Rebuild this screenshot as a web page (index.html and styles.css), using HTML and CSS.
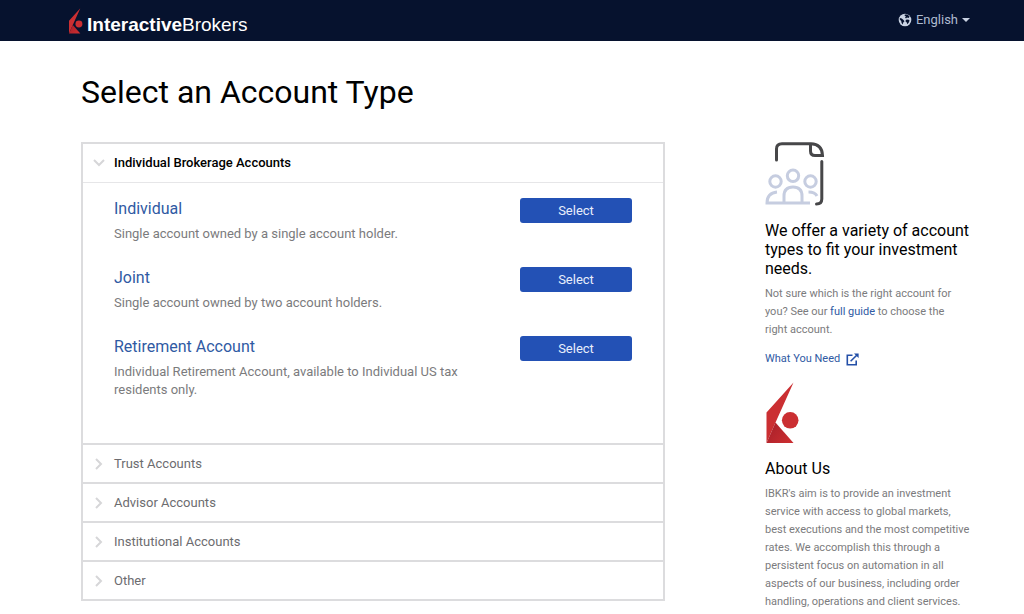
FILE: index.html
```html
<!DOCTYPE html>
<html lang="en">
<head>
<meta charset="utf-8">
<meta name="viewport" content="width=device-width, initial-scale=1">
<title>Select an Account Type</title>
<link rel="stylesheet" href="styles.css">
</head>
<body>
<svg class="defs" aria-hidden="true">
  <defs>
    <linearGradient id="fold" x1="0" y1="0" x2="1" y2="0.6">
      <stop offset="0.1" stop-color="#a8202a"/>
      <stop offset="1" stop-color="#c92d30"/>
    </linearGradient>
    <symbol id="mark" viewBox="0 0 34 62">
      <path fill="#cb2f32" d="M28.500 0.500 10.500 40.500 1.500 61V30.500z"/>
      <path fill="url(#fold)" d="M10.500 40.500 28.500 61H1.500z"/>
      <circle cx="25.200" cy="38.300" r="8.300" fill="#cb2f32"/>
    </symbol>
    <symbol id="chevron" viewBox="0 0 12 12">
      <path d="M3 1 8 6 3 11" fill="none" stroke="#d6d6d8" stroke-width="2"/>
    </symbol>
  </defs>
</svg>
<header class="topbar">
  <a class="brand" href="#">
    <svg class="brand-mark" aria-hidden="true"><use href="#mark"/></svg>
    <span class="brand-name"><b>Interactive</b>Brokers</span>
  </a>
  <button class="language" type="button">
    <svg class="globe" viewBox="0 0 14 14" aria-hidden="true">
      <circle cx="7" cy="7" r="6.300" fill="#c9d2e2"/>
      <path fill="#06122e" d="M6.800 1.600 9.400 1.600 11.600 3.400 10.600 5 9 4.600 8 5.400 7 4.600 8 3.400 6.600 2.800zM1.800 5 3.800 5.400 5.800 7.200 6.400 8.600 5.200 9.600 4.800 11.600 3.600 10 3.200 8 1.800 6.600zM8 6.800 10.200 6.600 11.600 7.600 10.800 9.600 9.400 11.200 8.600 9.200 7.400 8.200z"/>
    </svg>
    <span>English</span>
    <span class="caret"></span>
  </button>
</header>
<main class="page">
  <h1 class="title">Select an Account Type</h1>
  <div class="columns">
    <div class="accordion">
      <section class="group group-open">
        <h2 class="group-title"><button class="toggle toggle-open" type="button" aria-expanded="true"><svg class="chevron chevron-down" aria-hidden="true"><use href="#chevron"/></svg>Individual Brokerage Accounts</button></h2>
        <div class="panel">
          <div class="option">
            <div class="option-text"><h3 class="option-name"><a href="#">Individual</a></h3><p class="option-info">Single account owned by a single account holder.</p></div>
            <button class="select" type="button">Select</button>
          </div>
          <div class="option">
            <div class="option-text"><h3 class="option-name"><a href="#">Joint</a></h3><p class="option-info">Single account owned by two account holders.</p></div>
            <button class="select" type="button">Select</button>
          </div>
          <div class="option">
            <div class="option-text"><h3 class="option-name"><a href="#">Retirement Account</a></h3><p class="option-info">Individual Retirement Account, available to Individual US tax residents only.</p></div>
            <button class="select" type="button">Select</button>
          </div>
        </div>
      </section>
      <section class="group"><h2 class="group-title"><button class="toggle" type="button" aria-expanded="false"><svg class="chevron" aria-hidden="true"><use href="#chevron"/></svg>Trust Accounts</button></h2></section>
      <section class="group"><h2 class="group-title"><button class="toggle" type="button" aria-expanded="false"><svg class="chevron" aria-hidden="true"><use href="#chevron"/></svg>Advisor Accounts</button></h2></section>
      <section class="group"><h2 class="group-title"><button class="toggle" type="button" aria-expanded="false"><svg class="chevron" aria-hidden="true"><use href="#chevron"/></svg>Institutional Accounts</button></h2></section>
      <section class="group"><h2 class="group-title"><button class="toggle" type="button" aria-expanded="false"><svg class="chevron" aria-hidden="true"><use href="#chevron"/></svg>Other</button></h2></section>
    </div>
    <aside class="sidebar">
      <section class="note">
        <svg class="people" viewBox="0 0 60 64" fill="none" stroke-width="3" aria-hidden="true">
          <g stroke="#474749" stroke-linecap="round">
            <path d="M11.500 18V7Q11.500 1.800 17 1.800H46Q57 2 57.500 13.500H50Q45.500 13.500 45.500 9V2"/>
            <path d="M56.800 19.500V57Q56.800 62 51.500 62"/>
          </g>
          <g stroke="#c6cde0">
            <circle cx="10.500" cy="39.500" r="5.700"/>
            <circle cx="28" cy="33.800" r="5.700"/>
            <circle cx="45.500" cy="39.500" r="5.700"/>
            <path d="M12 50Q2 51 2 61H45"/>
            <path d="M19 61V54Q19 45 28 45T37 54V61"/>
            <path d="M43.500 50Q50 50 52 54"/>
          </g>
        </svg>
        <h2 class="note-title">We offer a variety of account types to fit your investment needs.</h2>
        <p class="note-text note-text-short">Not sure which is the right account for you? See our <a href="#">full guide</a> to choose the right account.</p>
        <a class="note-link" href="#">What You Need
          <svg class="external" viewBox="0 0 13 13" fill="none" stroke="#2450a8" aria-hidden="true"><path stroke-width="1.600" d="M6.500 2.300H1.300V11.700H10.200V7.500M4.600 8.300 11 2"/><path d="M8 .5H12.600V5z" fill="#2450a8" stroke="none"/></svg>
        </a>
      </section>
      <section class="note">
        <svg class="about-mark" aria-hidden="true"><use href="#mark"/></svg>
        <h2 class="note-title">About Us</h2>
        <p class="note-text">IBKR's aim is to provide an investment service with access to global markets, best executions and the most competitive rates. We accomplish this through a persistent focus on automation in all aspects of our business, including order handling, operations and client services.</p>
      </section>
    </aside>
  </div>
</main>
</body>
</html>
```
FILE: styles.css
```css
* { box-sizing: border-box; }
body {
  margin: 0;
  background: #fff;
  color: #000;
  font: 13px/18px Roboto, "Liberation Sans", sans-serif;
}
h1, h2, h3, p { margin: 0; font-weight: 400; }
a { color: #2f5aa3; text-decoration: none; }
button { border: 0; font: inherit; cursor: pointer; }
.defs { position: absolute; width: 0; height: 0; }

.topbar {
  display: flex;
  justify-content: space-between;
  align-items: center;
  height: 41px;
  padding: 0 54px 0 68px;
  background: #06122e;
}
.brand { display: flex; align-items: flex-end; gap: 4px; color: #fff; }
.brand-mark { width: 15px; height: 26px; }
.brand-name { font: 19px/18px "Liberation Sans", Arial, sans-serif; }
.language {
  display: flex;
  align-items: center;
  gap: 4px;
  padding: 0 0 1px;
  background: none;
  color: #aebbd0;
}
.globe { width: 14px; height: 14px; }
.caret {
  border: 4px solid transparent;
  border-top-color: #c9d2e2;
  border-bottom: 0;
}

.page { padding: 32px 50px 4px 81px; }
.title { font-size: 32px; line-height: 38px; }
.columns { display: flex; align-items: flex-start; gap: 100px; margin-top: 31px; }
.accordion { flex: 1; border: 2px solid #dcdcde; }
.group + .group { border-top: 2px solid #dcdcde; }
.group-title { font-size: 13px; line-height: 18px; }
.toggle {
  display: flex;
  align-items: center;
  gap: 9px;
  width: 100%;
  padding: 10px 10px 9px;
  background: none;
  color: #6c6c6f;
  text-align: left;
}
.toggle-open { padding: 10px; color: #000; font-weight: 500; }
.chevron { width: 12px; height: 12px; }
.chevron-down { transform: rotate(90deg); }

.panel {
  display: flex;
  flex-direction: column;
  gap: 24px;
  padding: 15px 31px 44px;
  border-top: 1px solid #e6e6e8;
}
.option { display: flex; justify-content: space-between; align-items: flex-start; gap: 50px; }
.option-text { max-width: 350px; }
.option-name { font-size: 16px; line-height: 22px; }
.option-info { margin-top: 5px; color: #7b7b7d; }
.select {
  flex: none;
  width: 112px;
  height: 25px;
  border-radius: 3px;
  background: #2351b5;
  color: #e8eefb;
}

.sidebar { flex: none; display: flex; flex-direction: column; gap: 14px; width: 209px; }
.note { display: flex; flex-direction: column; align-items: flex-start; }
.people { width: 60px; height: 64px; }
.note-title { margin-top: 15px; font-size: 16px; line-height: 19px; }
.note-text { margin-top: 7px; color: #7b7b7d; font-size: 11px; line-height: 18px; }
.note-text-short { max-width: 200px; }
.note-link { display: flex; align-items: center; gap: 6px; margin-top: 11px; font-size: 11px; line-height: 18px; }
.external { width: 13px; height: 13px; }
.about-mark { width: 34px; height: 62px; }
```
